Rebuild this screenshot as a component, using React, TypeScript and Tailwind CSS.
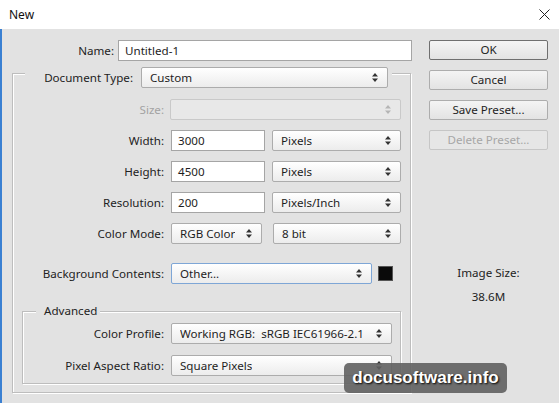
import React from 'react';

const font = { fontFamily: '"Noto Sans", "Open Sans", sans-serif' };

function Arrows({ disabled }: { disabled?: boolean }) {
  return (
    <svg width="6" height="9" viewBox="0 0 6 9" className="shrink-0">
      <path d="M3 0 L6 3.5 L0 3.5 Z M3 9 L6 5.5 L0 5.5 Z" fill={disabled ? '#b5b5b5' : '#333'} />
    </svg>
  );
}

function Select({
  value,
  width,
  disabled,
  focused,
}: {
  value?: string;
  width: string;
  disabled?: boolean;
  focused?: boolean;
}) {
  return (
    <div
      className={`${width} h-[21px] flex items-center justify-between pl-[8px] pr-[9px] rounded-[2px] border text-[11.6px] text-[#1e1e1e] ${
        disabled
          ? 'border-[#c9c9c9] bg-[#e8e8e8]'
          : focused
          ? 'border-[#7ea6d6] bg-gradient-to-b from-white to-[#ececec]'
          : 'border-[#acacac] bg-gradient-to-b from-white to-[#ececec]'
      }`}
    >
      <span className="truncate whitespace-pre">{value}</span>
      <Arrows disabled={disabled} />
    </div>
  );
}

function Input({ value, width }: { value: string; width: string }) {
  return (
    <div
      className={`${width} h-[21px] flex items-center pl-[6px] bg-white border border-[#a5a5a5] text-[11.6px] text-[#1e1e1e]`}
    >
      {value}
    </div>
  );
}

function Label({ children, width, disabled }: { children: React.ReactNode; width: string; disabled?: boolean }) {
  return (
    <div className={`${width} shrink-0 text-right text-[11.6px] ${disabled ? 'text-[#a3a3a3]' : 'text-[#222]'}`}>
      {children}
    </div>
  );
}

function Button({ children, primary, disabled }: { children: React.ReactNode; primary?: boolean; disabled?: boolean }) {
  return (
    <div
      className={`w-[119px] h-[20px] flex items-center justify-center rounded-[2px] text-[11.6px] border ${
        primary
          ? 'border-[#6f6f6f] bg-gradient-to-b from-[#f4f4f4] to-[#e3e3e3] text-[#1e1e1e]'
          : disabled
          ? 'border-[#c6c6c6] bg-[#e6e6e6] text-[#a6a6a6]'
          : 'border-[#adadad] bg-gradient-to-b from-[#f4f4f4] to-[#e3e3e3] text-[#1e1e1e]'
      }`}
    >
      {children}
    </div>
  );
}

export default function App() {
  return (
    <div className="w-[559px] h-[403px] overflow-hidden relative bg-[#e2e2e2]" style={font}>
      {/* title bar */}
      <div className="h-[29px] bg-white flex items-center justify-between pl-[9px] pr-[5px]">
        <span className="text-[12px] text-[#111]">New</span>
        <svg width="11" height="11" viewBox="0 0 11 11" className="mr-[4px]">
          <path d="M0.5 0.5 L10.5 10.5 M10.5 0.5 L0.5 10.5" stroke="#222" strokeWidth="1" />
        </svg>
      </div>

      <div className="flex h-[374px] border-l-2 border-[#3a80d2]">
        {/* left column */}
        <div className="w-[410px] pl-[10px] pt-[11px]">
          <div className="flex items-center gap-[4px] h-[21px]">
            <Label width="w-[102px]">Name:</Label>
            <Input value="Untitled-1" width="w-[294px]" />
          </div>

          <div className="mt-[12px] w-[399px] border border-[#bdbdbd] shadow-[1px_1px_0_#fff,inset_1px_1px_0_#fff] pb-[8px]">
            <div className="-mt-[7px] ml-[12px] w-[367px] flex items-center gap-[8px] bg-[#e2e2e2] pr-[4px]">
              <Label width="w-[108px]">Document Type:</Label>
              <Select value="Custom" width="w-[247px]" />
            </div>

            <div className="mt-[11px] flex items-center gap-[6px]">
              <Label width="w-[151px]" disabled>Size:</Label>
              <Select width="w-[231px]" disabled />
            </div>

            <div className="mt-[10px] flex items-center gap-[7px]">
              <Label width="w-[151px]">Width:</Label>
              <Input value="3000" width="w-[94px]" />
              <Select value="Pixels" width="w-[129px]" />
            </div>

            <div className="mt-[10px] flex items-center gap-[7px]">
              <Label width="w-[151px]">Height:</Label>
              <Input value="4500" width="w-[94px]" />
              <Select value="Pixels" width="w-[129px]" />
            </div>

            <div className="mt-[10px] flex items-center gap-[7px]">
              <Label width="w-[151px]">Resolution:</Label>
              <Input value="200" width="w-[94px]" />
              <Select value="Pixels/Inch" width="w-[129px]" />
            </div>

            <div className="mt-[10px] flex items-center gap-[7px]">
              <Label width="w-[151px]">Color Mode:</Label>
              <Select value="RGB Color" width="w-[91px]" />
              <div className="ml-[4px]">
                <Select value="8 bit" width="w-[128px]" />
              </div>
            </div>

            <div className="mt-[19px] flex items-center gap-[7px]">
              <Label width="w-[151px]">Background Contents:</Label>
              <Select value="Other..." width="w-[201px]" focused />
              <div className="ml-[-1px] w-[15px] h-[15px] bg-[#0a0a0a] border border-[#555]" />
            </div>

            {/* advanced */}
            <div className="mt-[27px] mx-[9px] border border-[#bdbdbd] shadow-[1px_1px_0_#fff,inset_1px_1px_0_#fff] pb-[7px]">
              <div className="-mt-[9px] ml-[13px] w-fit pl-[8px] pr-[3px] bg-[#e2e2e2] text-[11.6px] text-[#222] leading-[16px]">
                Advanced
              </div>
              <div className="mt-[4px] flex items-center gap-[7px]">
                <Label width="w-[141px]">Color Profile:</Label>
                <Select value="Working RGB:  sRGB IEC61966-2.1" width="w-[221px]" />
              </div>
              <div className="mt-[11px] flex items-center gap-[7px]">
                <Label width="w-[141px]">Pixel Aspect Ratio:</Label>
                <Select value="Square Pixels" width="w-[221px]" />
              </div>
            </div>
          </div>
        </div>

        {/* right column */}
        <div className="ml-[17px] w-[119px] pt-[11px] flex flex-col items-center">
          <Button primary>OK</Button>
          <div className="mt-[10px]">
            <Button>Cancel</Button>
          </div>
          <div className="mt-[10px]">
            <Button>Save Preset...</Button>
          </div>
          <div className="mt-[10px]">
            <Button disabled>Delete Preset...</Button>
          </div>
          <div className="mt-[115px] text-[11.6px] leading-[16px] text-[#222]">Image Size:</div>
          <div className="mt-[8px] text-[11.6px] leading-[16px] text-[#222]">38.6M</div>
        </div>
      </div>

      {/* watermark */}
      <div className="absolute left-[344px] top-[363px] w-[163px] h-[30px] rounded-[5px] bg-[#606060]/90 flex items-center justify-center">
        <span
          className="text-white text-[17px] font-bold"
          style={{ fontFamily: '"Liberation Sans", Arial, sans-serif', textShadow: '1px 1px 2px #000' }}
        >
          docusoftware.info
        </span>
      </div>
    </div>
  );
}
